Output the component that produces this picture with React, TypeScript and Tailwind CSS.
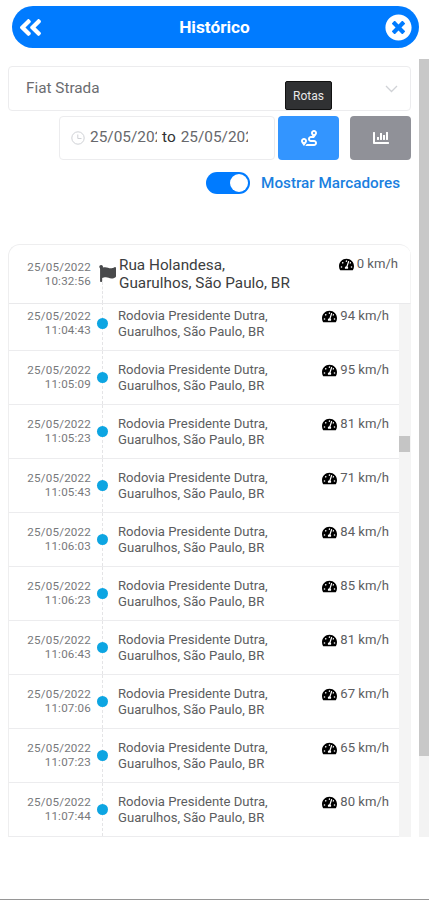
import { useState } from "react";
import {
  FaAngleDoubleLeft,
  FaChartBar,
  FaFlag,
  FaRoute,
  FaTachometerAlt,
  FaTimesCircle,
} from "react-icons/fa";

const positions = [
  { time: "11:04:43", speed: 94 },
  { time: "11:05:09", speed: 95 },
  { time: "11:05:23", speed: 81 },
  { time: "11:05:43", speed: 71 },
  { time: "11:06:03", speed: 84 },
  { time: "11:06:23", speed: 85 },
  { time: "11:06:43", speed: 81 },
  { time: "11:07:06", speed: 67 },
  { time: "11:07:23", speed: 65 },
  { time: "11:07:44", speed: 80 },
];

function Header() {
  return (
    <header className="ml-[12px] flex h-[42px] w-[407px] shrink-0 items-center justify-between rounded-full bg-[#007bff] pr-[7px] pl-[5px] text-white">
      <button className="flex w-[27px] justify-center">
        <FaAngleDoubleLeft size={27} />
      </button>
      <h1 className="pt-px text-[17.3px] font-bold">Histórico</h1>
      <button>
        <FaTimesCircle size={27} />
      </button>
    </header>
  );
}

function Filters() {
  const [markers, setMarkers] = useState(true);
  const [start, setStart] = useState("25/05/2022");
  const [end, setEnd] = useState("25/05/2022");

  return (
    <div>
      <div className="flex h-[45px] items-center justify-between rounded border border-[#ececee] pr-3 pl-[17px]">
        <span className="text-[15.3px] text-[#6b6c70]">Fiat Strada</span>
        <svg width="13" height="8" viewBox="0 0 13 8" fill="none" stroke="#d0d2d6" strokeWidth="1.3">
          <path d="M1 1l5.5 5.5L12 1" />
        </svg>
      </div>
      <div className="mt-[5px] flex h-[44px] justify-end">
        <div className="mr-[3px] flex w-[216px] items-center rounded border border-[#ececee] pl-[11px] text-[15.4px] text-[#67686c]">
          <svg width="14" height="14" viewBox="0 0 14 14" fill="none" stroke="#cfd1d5">
            <circle cx="7" cy="7" r="6.2" />
            <path d="M6.8 3.5v4h3.7" />
          </svg>
          <input
            value={start}
            onChange={(e) => setStart(e.target.value)}
            className="ml-[5px] w-[67px] focus:outline-none"
          />
          <span className="ml-[5px] text-[#303133]">to</span>
          <input
            value={end}
            onChange={(e) => setEnd(e.target.value)}
            className="ml-[5px] w-[67px] focus:outline-none"
          />
        </div>
        <div className="relative mr-[11px]">
          <button className="flex h-[44px] w-[61px] items-center justify-center rounded bg-[#3395ff] text-white">
            <FaRoute size={16} />
          </button>
          <span className="absolute -top-[35px] left-[7px] flex h-[29px] w-[47px] items-center justify-center rounded-[2px] border border-[#111] bg-[#303133] text-[12px] text-[#e8e8e8]">
            Rotas
          </span>
        </div>
        <button className="flex h-[44px] w-[61px] items-center justify-center rounded bg-[#909198] text-white">
          <FaChartBar size={16} />
        </button>
      </div>
      <div className="mt-[11px] flex h-[24px] items-center justify-end pr-[11px]">
        <button
          onClick={() => setMarkers(!markers)}
          className={`flex h-[22px] w-[44px] items-center rounded-full px-[2px] ${
            markers ? "justify-end bg-[#007bff]" : "justify-start bg-[#dcdfe6]"
          }`}
        >
          <span className="h-[18px] w-[18px] rounded-full bg-white" />
        </button>
        <span className="ml-[11px] text-[15.25px] font-medium text-[#1a7fe0]">
          Mostrar Marcadores
        </span>
      </div>
    </div>
  );
}

function Stamp({ time }: { time: string }) {
  return (
    <div className="w-[82px] text-right text-[11.6px] leading-[14px] tracking-[0.2px] text-[#77787b]">
      25/05/2022
      <br />
      {time}
    </div>
  );
}

function Speed({ value }: { value: number }) {
  return (
    <div className="flex items-center gap-[3px] text-[13.1px] leading-[16px] text-[#5c5d61]">
      <FaTachometerAlt size={15} className="text-black" />
      {value} km/h
    </div>
  );
}

function History() {
  return (
    <div className="mt-[49px] flex h-[593px] flex-col overflow-hidden rounded-t-[12px] border-t border-l border-[#eeeeef]">
      <div className="flex h-[59px] shrink-0 border-r border-b border-r-[#f4f4f4] border-b-[#e9e9eb]">
        <div className="pt-[15px]">
          <Stamp time="10:32:56" />
        </div>
        <div className="ml-[8px] flex w-[19px] flex-col items-start pt-[20px]">
          <FaFlag size={17} className="text-[#48494b]" />
          <div className="ml-[3px] flex-1 border-l border-dashed border-[#e4e4e6]" />
        </div>
        <div className="pt-[11px] pl-[1px] text-[15.3px] leading-[18px] text-[#3c3d40]">
          Rua Holandesa,
          <br />
          Guarulhos, São Paulo, BR
        </div>
        <div className="mr-[12px] ml-auto pt-[11px]">
          <Speed value={0} />
        </div>
      </div>
      <div className="flex min-h-0 flex-1">
        <div className="flex flex-1 flex-col justify-end overflow-hidden">
          {positions.map((p) => (
            <div key={p.time} className="flex h-[54px] shrink-0 border-b border-[#ececee]">
              <div className="pt-[12px]">
                <Stamp time={p.time} />
              </div>
              <div className="ml-[5px] grid w-[12px] items-center justify-items-center">
                <div className="col-start-1 row-start-1 h-full border-l border-dashed border-[#e4e4e6]" />
                <div className="col-start-1 row-start-1 h-[11px] w-[11px] rounded-full bg-[#0da5e2]" />
              </div>
              <div className="pt-[11px] pl-[10px] text-[13.1px] leading-[15.5px] text-[#5c5d60]">
                Rodovia Presidente Dutra,
                <br />
                Guarulhos, São Paulo, BR
              </div>
              <div className="mr-[10px] ml-auto pt-[11px]">
                <Speed value={p.speed} />
              </div>
            </div>
          ))}
        </div>
        <div className="w-[12px] bg-[#f4f4f4] pt-[132px]">
          <div className="h-[16px] w-[11px] bg-[#c5c5c5]" />
        </div>
      </div>
    </div>
  );
}

export default function App() {
  return (
    <div className="flex h-[900px] w-[429px] flex-col overflow-hidden border-b border-[#969696] bg-white pt-[6px] font-['Roboto',sans-serif]">
      <Header />
      <div className="flex">
        <div className="ml-[8px] w-[403px] pt-[18px]">
          <Filters />
          <History />
        </div>
        <div className="mt-[11px] ml-auto h-[778px] w-[10px] bg-[#f3f3f3]">
          <div className="h-[697px] bg-[#c8c8c8]" />
        </div>
      </div>
    </div>
  );
}
